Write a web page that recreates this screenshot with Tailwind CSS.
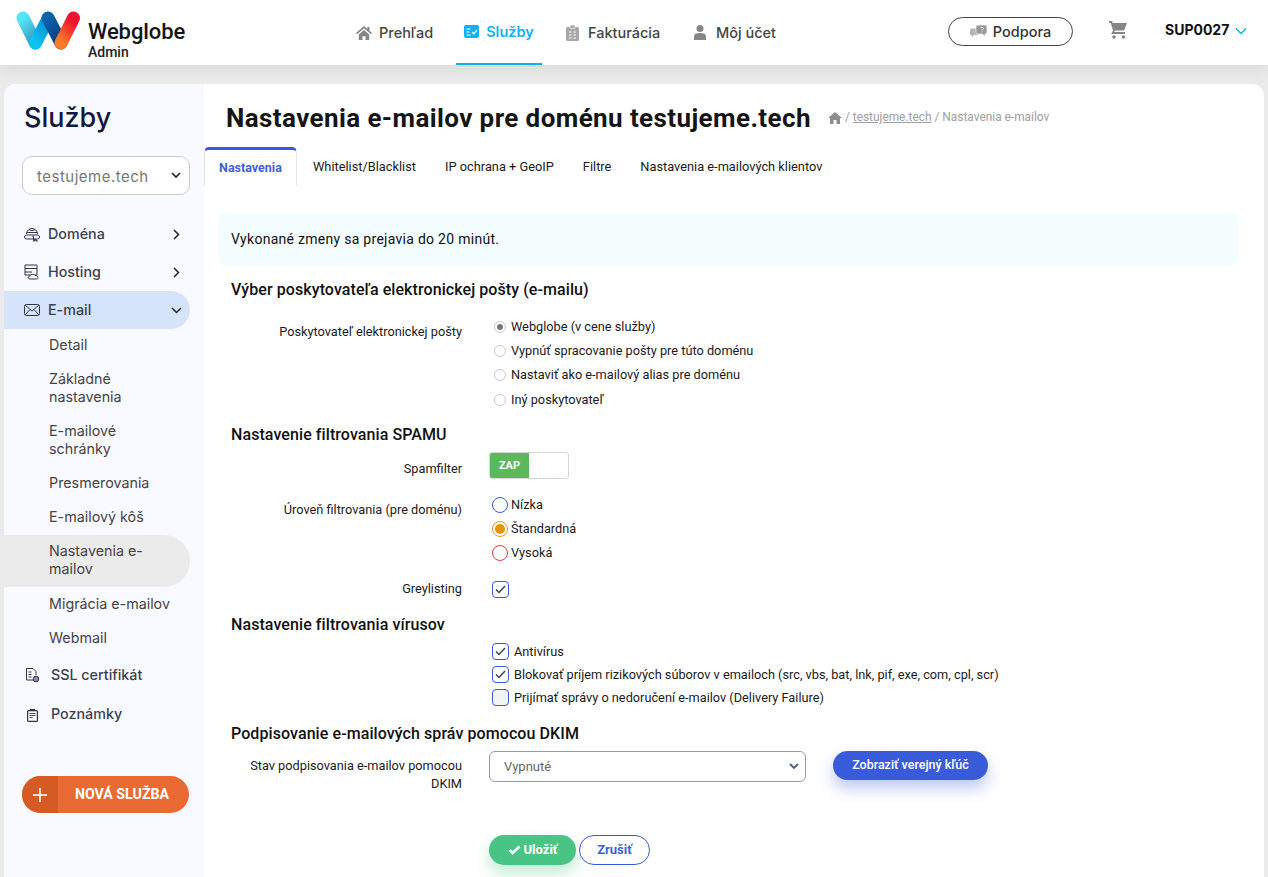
<!DOCTYPE html>
<html lang="sk"><head><meta charset="utf-8"><title>Webglobe</title>
<script src="https://cdn.jsdelivr.net/npm/@tailwindcss/browser@4"></script></head>
<body class="m-0 bg-[#ebebeb] font-['Roboto',sans-serif] text-[#111] h-[877px] overflow-hidden">
<header class="relative z-10 h-[65px] bg-white shadow-[0_6px_14px_rgba(0,0,0,0.07)] flex items-start">
  <div class="flex w-[340px] pl-[16px] pt-[11px]">
    <svg width="66" height="42" viewBox="0 0 66 42" class="shrink-0">
      <defs>
        <linearGradient id="a" x1="0" y1="0" x2="0.4" y2="1"><stop offset="0" stop-color="#55e6f5"/><stop offset="1" stop-color="#3a9fc4"/></linearGradient>
        <linearGradient id="b" x1="0" y1="1" x2="0.6" y2="0"><stop offset="0" stop-color="#0cc4f4"/><stop offset="1" stop-color="#0a8fd0"/></linearGradient>
        <linearGradient id="c" x1="0" y1="0" x2="0.5" y2="1"><stop offset="0" stop-color="#0a63a8"/><stop offset="1" stop-color="#043f86"/></linearGradient>
        <linearGradient id="d" x1="0.7" y1="0" x2="0.2" y2="1"><stop offset="0" stop-color="#f01030"/><stop offset="1" stop-color="#f97a28"/></linearGradient>
      </defs>
      <path d="M7 7 L19.5 32" stroke="url(#a)" stroke-width="13" stroke-linecap="round" fill="none"/>
      <path d="M19.5 32 L32 8" stroke="url(#b)" stroke-width="13" stroke-linecap="round" fill="none"/>
      <path d="M32 7 L45 32" stroke="url(#c)" stroke-width="13" stroke-linecap="round" fill="none"/>
      <path d="M45 32 L57.5 7" stroke="url(#d)" stroke-width="13" stroke-linecap="round" fill="none"/>
    </svg>
    <div class="ml-[6px] mt-px">
      <div class="text-[22px] font-medium leading-[26px] mt-[7px] text-[#151515] tracking-[-0.1px]">Webglobe</div>
      <div class="text-[14px] font-medium leading-[15px] text-[#222]">Admin</div>
    </div>
  </div>
  <nav class="flex items-start h-[65px] font-['Inter',sans-serif] text-[14.5px] font-medium text-[#444]">
    <a class="flex items-center h-[65px] w-[116px] pl-[16px] gap-[7px]"><svg width="16" height="14" viewBox="0 0 16 14" fill="#85868a"><path d="M8 0 0 7l1 1.2L8 2.2l7 6 1-1.2-2.5-2.2V1h-2v2L8 0ZM2.8 8.6V14h3.7v-3.8h3V14h3.700V8.600L8 4 2.800 8.600Z"/></svg>Prehľad</a>
    <a class="flex items-center h-[65px] w-[86px] justify-center gap-[7px] text-[#0db2f5] font-semibold border-b-2 border-[#0db2f5]"><svg width="15" height="13" viewBox="0 0 15 13"><rect width="15" height="13" rx="2" fill="#0db2f5"/><path d="M2.500 4h4M2.500 7h3M2.500 10h4" stroke="#fff" stroke-width="1.200"/><path d="m8 7 1.800 1.800L13 5" stroke="#fff" stroke-width="1.300" fill="none"/></svg>Služby</a>
    <a class="flex items-center h-[65px] ml-[24px] w-[128px] gap-[9px]"><svg width="13" height="16" viewBox="0 0 13 16"><rect y="2" width="13" height="14" rx="1.500" fill="#a8a8ab"/><rect x="4" width="5" height="3.500" rx="1" fill="#a8a8ab" stroke="#fff" stroke-width=".6"/><path d="M3 7h2.500M7.500 7H10M3 10h2.500M7.500 10H10M3 13h2.500M7.500 13H10" stroke="#fff" stroke-width="1"/></svg>Fakturácia</a>
    <a class="flex items-center h-[65px] gap-[10px]"><svg width="12" height="15" viewBox="0 0 12 15" fill="#86878b"><circle cx="6" cy="3.500" r="3.500"/><path d="M0 15v-3.500C0 9 2 8 6 8s6 1 6 3.500V15H0Z"/></svg>Môj účet</a>
  </nav>
  <div class="flex items-start ml-auto font-['Inter',sans-serif]">
    <a class="mt-[17px] w-[125px] h-[29px] border border-[#444] rounded-full flex items-center justify-center gap-[6px] text-[14.5px] font-medium text-[#333]"><svg width="17" height="14" viewBox="0 0 17 14"><path d="M0 5.500C0 4 1 3.500 2.500 3.500H8V10H4L1.500 12.500V10C.5 10 0 9.500 0 8.500Z" fill="#b5b5b5"/><path d="M6 2C6 .8 7 0 8 0h7c1 0 2 .8 2 2v5c0 1-1 2-2 2v2.500L12.500 9H8C7 9 6 8 6 7Z" fill="#9a9a9a" stroke="#fff" stroke-width=".6"/><path d="M10.500 3c.3-1 2.700-1 2.700.4 0 1-1.200 1-1.200 1.900M12 6.500v.8" stroke="#fff" stroke-width="1" fill="none"/></svg>Podpora</a>
    <svg width="20" height="19" viewBox="0 0 20 19" class="ml-[35px] mt-[20px]" fill="#85868a"><path d="M1 1h3l.8 2H19l-3 7.500H7l-.9 1.600H17v1.900H3.200l1.900-3.400L2.700 3H1Z"/><circle cx="6" cy="17" r="1.800"/><circle cx="15.500" cy="17" r="1.800"/></svg>
    <div class="ml-[37px] mt-[21px] text-[14px] font-bold leading-[18px] text-[#111] w-[70px]">SUP0027</div>
    <svg width="12" height="8" viewBox="0 0 12 8" class="mt-[27px] mr-[21px]"><path d="m1 1.500 5 5 5-5" stroke="#0db2f5" stroke-width="1.500" fill="none"/></svg>
  </div>
</header>

<div class="mx-[4px] mt-[19px] h-[793px] bg-white rounded-t-[12px] flex overflow-hidden">
  <aside class="w-[200px] shrink-0 bg-[#f9faff] font-['Inter',sans-serif] text-[14.3px] font-medium text-[#3a3f52]">
    <div class="pl-[20px] pt-[16px] text-[27px] leading-[36px] font-medium text-[#14183c]">Služby</div>
    <div class="ml-[18px] mt-[20px] w-[168px] h-[39px] border border-[#ccc] rounded-[10px] bg-white flex items-center pl-[14px] pr-[8px] justify-between text-[15px] text-[#777] font-normal tracking-[0.5px]"><span class="pt-[3px]">testujeme.tech</span><svg width="10" height="7" viewBox="0 0 10 7"><path d="m1 1 4 4 4-4" stroke="#1b2140" stroke-width="1.600" fill="none"/></svg></div>
    <div class="mt-[20px]">
      <a class="flex items-center h-[38px] pl-[20px] pr-[10px] w-[186px]"><svg width="16" height="16" viewBox="0 0 16 16" fill="none" stroke="#2e3350" stroke-width="1" class="mr-[8px]"><path d="M2.500 8a5.500 5.500 0 0 1 11 0"/><path d="M5 3.500c2 1.500 4 1.500 6 0M3 6.500h10"/><rect x=".5" y="9" width="15" height="4" rx="2"/><path d="m9 9.500 1 5.500 1.500-1.500 2 2" stroke-width="1.200"/></svg><span>Doména</span><svg width="7" height="11" viewBox="0 0 7 11" class="ml-auto"><path d="m1 1 4.500 4.500L1 10" stroke="#1b2140" stroke-width="1.500" fill="none"/></svg></a>
      <a class="flex items-center h-[38px] pl-[20px] pr-[10px] w-[186px]"><svg width="16" height="16" viewBox="0 0 16 16" fill="none" stroke="#2e3350" stroke-width="1" class="mr-[8px]"><path d="M1 1h12v10H1zM1 4.500h12M1 8h7"/><path d="M6 15c-2.500 0-2.500-3 0-3 .5-2 4-2.500 5-.5 2.500-.5 4.500 3.500 1.500 3.500Z" fill="#f9faff"/></svg><span>Hosting</span><svg width="7" height="11" viewBox="0 0 7 11" class="ml-auto"><path d="m1 1 4.500 4.500L1 10" stroke="#1b2140" stroke-width="1.500" fill="none"/></svg></a>
      <a class="flex items-center h-[38px] pl-[20px] pr-[8px] w-[186px] bg-[#d6e4fb] rounded-r-full"><svg width="16" height="12" viewBox="0 0 16 12" fill="none" stroke="#2e3350" stroke-width="1" class="mr-[8px]"><rect x=".5" y=".5" width="15" height="11" rx="2"/><path d="m1 1 7 6 7-6M1 11l5-5.500M15 11l-5-5.500"/></svg><span>E-mail</span><svg width="11" height="7" viewBox="0 0 11 7" class="ml-auto"><path d="m1 1 4.500 4.500L10 1" stroke="#1b2140" stroke-width="1.500" fill="none"/></svg></a>
      <div class="-mt-px font-['Inter',sans-serif] leading-[18px] text-[#444] font-normal">
        <a class="block pl-[45px] pr-[40px] py-[8px]">Detail</a>
        <a class="block pl-[45px] pr-[40px] py-[8px]">Základné nastavenia</a>
        <a class="block pl-[45px] pr-[40px] py-[8px]">E-mailové schránky</a>
        <a class="block pl-[45px] pr-[40px] py-[8px]">Presmerovania</a>
        <a class="block pl-[45px] pr-[40px] pt-[8px] pb-[9px]">E-mailový kôš</a>
        <a class="block pl-[45px] pr-[30px] pt-[7px] pb-[9px] w-[186px] bg-[#ebebeb] rounded-r-[26px]">Nastavenia e-mailov</a>
        <a class="block pl-[45px] pr-[20px] py-[8px]">Migrácia e-mailov</a>
        <a class="block pl-[45px] pr-[40px] py-[8px]">Webmail</a>
      </div>
      <a class="flex items-center h-[38px] mt-px pl-[21px]"><svg width="15" height="16" viewBox="0 0 15 16" fill="none" stroke="#2e3350" stroke-width="1" class="mr-[11px]"><path d="M9 13H1.500V1.500H8l3 3V8"/><path d="M3.500 5h3M3.500 7.500h3M3.500 10h3"/><circle cx="11" cy="12" r="2.800" fill="#8a8d9e"/></svg><span>SSL certifikát</span></a>
      <a class="flex items-center h-[38px] mt-px pl-[23px]"><svg width="11" height="13" viewBox="0 0 11 13" fill="none" stroke="#2e3350" stroke-width="1.200" class="mr-[13px] mt-[3px]"><rect x=".6" y="1.600" width="9.800" height="10.800" rx="1"/><path d="M2.500 4.500h6M2.500 6.500h6M2.500 8.500h3" stroke="#555"/><path d="M3 .5h5" stroke-width="1.500"/></svg><span>Poznámky</span></a>
    </div>
    <a class="flex ml-[18px] mt-[43px] w-[167px] h-[37px] rounded-full overflow-hidden bg-[#ea6a33] text-white font-['Roboto',sans-serif] font-bold text-[14.2px]"><span class="w-[36px] bg-[#d65a23] flex items-center justify-center"><svg width="14" height="14" viewBox="0 0 14 14"><path d="M7 0v14M0 7h14" stroke="#fff" stroke-width="1.600"/></svg></span><span class="flex-1 flex items-center justify-center pr-[3px]">NOVÁ SLUŽBA</span></a>
  </aside>

  <main class="flex-1 min-w-0">
    <div class="flex items-center pl-[22px] pt-[5px] h-[63px]">
      <h1 class="text-[26px] font-bold leading-[36px] tracking-[0.4px] text-[#151515]">Nastavenia e-mailov pre doménu testujeme.tech</h1>
      <div class="ml-[17px] flex items-center text-[11.9px] text-[#a0a0a0] gap-[3px]"><svg width="14" height="12" viewBox="0 0 14 12" fill="#8d8d8d"><path d="M7 0 0 6h2v6h3.500V8h3v4H12V6h2Z"/></svg><span>/ <u>testujeme.tech</u> / Nastavenia e-mailov</span></div>
    </div>
    <div class="flex items-start h-[39px] text-[12.8px] text-[#1b1b1b]">
      <a class="w-[93px] h-[39px] bg-white border-t-[3px] border-x border-x-[#e8e8e8] border-t-[#3a5bd9] rounded-t-[5px] flex items-center justify-center font-bold text-[#3f5fd8] text-[12.5px]">Nastavenia</a>
      <div class="flex h-[39px] items-center gap-[29px] pl-[16px]"><a>Whitelist/Blacklist</a><a>IP ochrana + GeoIP</a><a>Filtre</a><a>Nastavenia e-mailových klientov</a></div>
    </div>
    <div class="mx-[14px] mt-[26px] w-[1020px] h-[54px] bg-[#f4fdff] rounded-[8px] flex items-center pl-[13px] text-[14px] tracking-[0.28px] text-[#111]">Vykonané zmeny sa prejavia do 20 minút.</div>

    <section class="text-[12.75px] leading-[24px] text-[#1b1b1b]">
      <h2 class="ml-[27px] mt-[14px] text-[16px] font-medium leading-[20px] text-[#111] tracking-[0.08px]">Výber poskytovateľa elektronickej pošty (e-mailu)</h2>
      <div class="flex mt-[15px]">
        <div class="w-[258px] text-right pt-[5px] shrink-0">Poskytovateľ elektronickej pošty</div>
        <div class="ml-[32px]">
          <div class="flex items-center h-[24px] gap-[5px]"><span class="w-[12px] h-[12px] rounded-full border border-[#c9c9c9] flex items-center justify-center"><span class="w-[6px] h-[6px] rounded-full bg-[#777]"></span></span>Webglobe (v cene služby)</div>
          <div class="flex items-center h-[24px] gap-[5px]"><span class="w-[12px] h-[12px] rounded-full border border-[#c9c9c9]"></span>Vypnúť spracovanie pošty pre túto doménu</div>
          <div class="flex items-center h-[24px] gap-[5px]"><span class="w-[12px] h-[12px] rounded-full border border-[#c9c9c9]"></span>Nastaviť ako e-mailový alias pre doménu</div>
          <div class="flex items-center h-[25px] pt-px gap-[5px]"><span class="w-[12px] h-[12px] rounded-full border border-[#c9c9c9]"></span>Iný poskytovateľ</div>
        </div>
      </div>
      <h2 class="ml-[27px] mt-[13px] text-[16px] font-medium leading-[20px] text-[#111] tracking-[0.08px]">Nastavenie filtrovania SPAMU</h2>
      <div class="flex mt-[7px]">
        <div class="w-[258px] text-right pt-[5px] shrink-0">Spamfilter</div>
        <div class="ml-[27px] w-[80px] h-[27px] border border-[#d5d5d5] rounded-[3px] flex overflow-hidden"><span class="w-[39px] bg-[#5cb85c] text-white font-bold text-[11px] flex items-center justify-center">ZAP</span></div>
      </div>
      <div class="flex mt-[12px]">
        <div class="w-[258px] text-right pt-[5px] shrink-0">Úroveň filtrovania (pre doménu)</div>
        <div class="ml-[30px]">
          <div class="flex items-center h-[24px] gap-[3px]"><span class="w-[16px] h-[16px] rounded-full border border-[#3a5bd9] bg-white"></span>Nízka</div>
          <div class="flex items-center h-[24px] gap-[3px]"><span class="w-[16px] h-[16px] rounded-full border border-[#e8951c] flex items-center justify-center"><span class="w-[10px] h-[10px] rounded-full bg-[#e3930f]"></span></span>Štandardná</div>
          <div class="flex items-center h-[24px] gap-[3px]"><span class="w-[16px] h-[16px] rounded-full border border-[#e53e3e]"></span>Vysoká</div>
        </div>
      </div>
      <div class="flex mt-[12px]">
        <div class="w-[258px] text-right shrink-0">Greylisting</div>
        <div class="ml-[30px] h-[24px] flex items-center"><span class="w-[17px] h-[17px] border border-[#3a5bd9] rounded-[4px] flex items-center justify-center"><svg width="11" height="9" viewBox="0 0 11 9"><path d="m1 4.500 3 3 6-6.500" stroke="#444" stroke-width="1.500" fill="none"/></svg></span></div>
      </div>
      <h2 class="ml-[27px] mt-[14px] text-[16px] font-medium leading-[20px] text-[#111] tracking-[0.08px]">Nastavenie filtrovania vírusov</h2>
      <div class="ml-[288px] mt-[5px] leading-[23px]">
        <div class="flex items-center h-[23px] gap-[5px]"><span class="w-[17px] h-[17px] border border-[#3a5bd9] rounded-[4px] flex items-center justify-center"><svg width="11" height="9" viewBox="0 0 11 9"><path d="m1 4.500 3 3 6-6.500" stroke="#444" stroke-width="1.500" fill="none"/></svg></span>Antivírus</div>
        <div class="flex items-center h-[23px] gap-[5px]"><span class="w-[17px] h-[17px] border border-[#3a5bd9] rounded-[4px] flex items-center justify-center"><svg width="11" height="9" viewBox="0 0 11 9"><path d="m1 4.500 3 3 6-6.500" stroke="#444" stroke-width="1.500" fill="none"/></svg></span>Blokovať príjem rizikových súborov v emailoch (src, vbs, bat, lnk, pif, exe, com, cpl, scr)</div>
        <div class="flex items-center h-[23px] gap-[5px]"><span class="w-[17px] h-[17px] border border-[#3a5bd9] rounded-[4px] bg-[#f3f3f3]"></span>Prijímať správy o nedoručení e-mailov (Delivery Failure)</div>
      </div>
      <h2 class="ml-[27px] mt-[15px] text-[16px] font-medium leading-[20px] text-[#111] tracking-[0.08px]">Podpisovanie e-mailových správ pomocou DKIM</h2>
      <div class="flex mt-[7px]">
        <div class="w-[258px] pl-[40px] text-right leading-[18px] pt-[6px] shrink-0">Stav podpisovania e-mailov pomocou DKIM</div>
        <div class="ml-[27px] w-[317px] h-[31px] border border-[#8f9bb3] rounded-[6px] flex items-center justify-between pl-[14px] pr-[6px] text-[13px] text-[#666]">Vypnuté<svg width="10" height="7" viewBox="0 0 10 7"><path d="m1 1 4 4 4-4" stroke="#4b5f7a" stroke-width="1.800" fill="none"/></svg></div>
        <a class="ml-[27px] w-[155px] h-[29px] rounded-full bg-[#3a5bd9] text-white font-medium text-[12.5px] flex items-center justify-center shadow-[0_8px_16px_rgba(58,91,217,0.35)] leading-none">Zobraziť verejný kľúč</a>
      </div>
      <div class="flex ml-[285px] mt-[42px] gap-[3px] text-[13px] font-bold">
        <a class="w-[87px] h-[30px] rounded-full bg-[#48c584] text-white flex items-center justify-center gap-[3px] shadow-[0_8px_16px_rgba(72,197,132,0.35)]"><svg width="13" height="10" viewBox="0 0 13 10"><path d="m1.500 5 3.200 3L11.500 1.500" stroke="#fff" stroke-width="2.600" fill="none"/></svg>Uložiť</a>
        <a class="w-[71px] h-[30px] rounded-full bg-white border border-[#3a5bd9] text-[#3f5fd8] flex items-center justify-center">Zrušiť</a>
      </div>
    </section>
  </main>
</div>
</body></html>
